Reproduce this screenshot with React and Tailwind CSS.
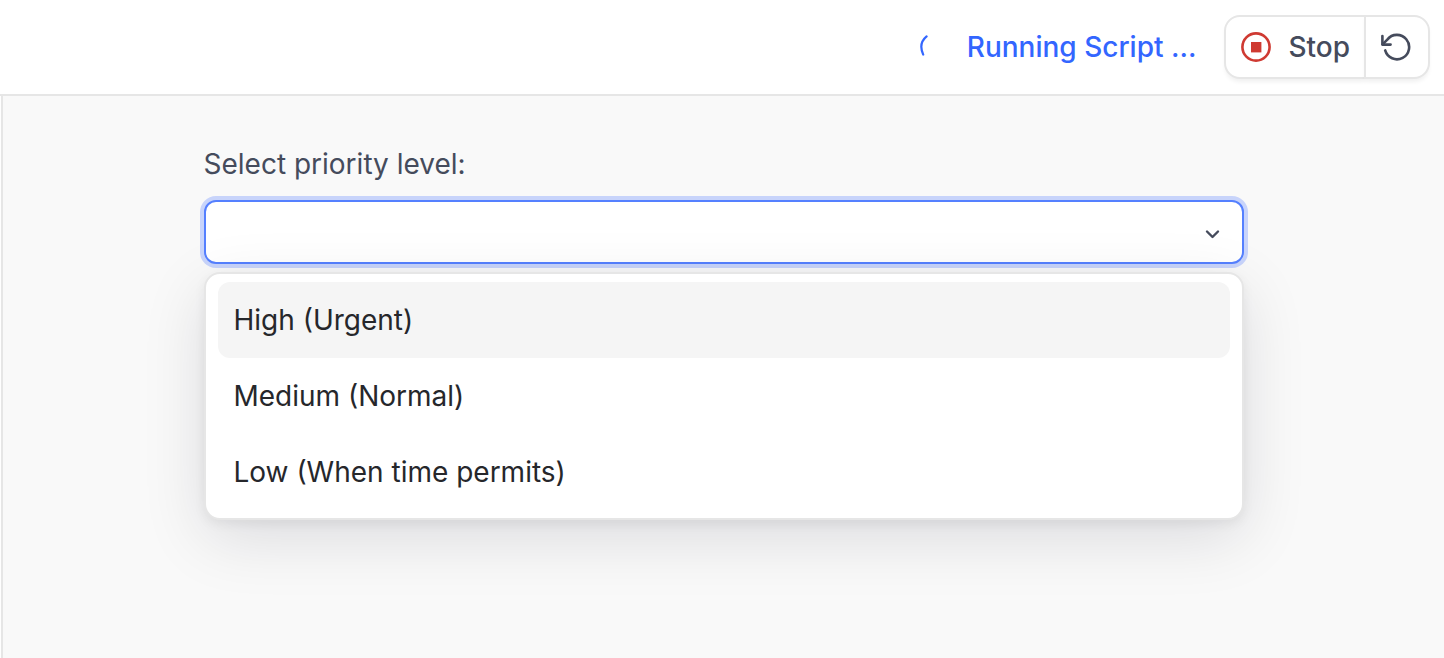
import { useState } from 'react';

const priorities = [
  { value: 'high', label: 'High (Urgent)' },
  { value: 'medium', label: 'Medium (Normal)' },
  { value: 'low', label: 'Low (When time permits)' },
];

function Spinner() {
  return (
    <svg className="size-7" viewBox="0 0 28 28" fill="none" aria-hidden="true">
      <path d="M7.6 3.4C2 8 0.8 14 4.2 21.6" stroke="#3366ff" strokeWidth="2.2" strokeLinecap="round" />
    </svg>
  );
}

function StopIcon() {
  return (
    <svg className="size-8" viewBox="0 0 32 32" fill="none" aria-hidden="true">
      <circle cx="16" cy="16" r="13.6" stroke="#cf3a32" strokeWidth="2.6" />
      <rect x="11" y="11" width="10.4" height="10.4" fill="#cf3a32" />
    </svg>
  );
}

function RestartIcon() {
  return (
    <svg
      className="size-8"
      viewBox="0 0 32 32"
      fill="none"
      stroke="#454b5c"
      strokeWidth="2.6"
      strokeLinecap="round"
      strokeLinejoin="round"
      aria-hidden="true"
    >
      <path d="M1.4 5v8.6H9.6" />
      <path d="M1.6 13.4 6.3 8.6A12.2 12.2 0 1 1 4.2 19.4" />
    </svg>
  );
}

function Header() {
  return (
    <header className="flex h-24 items-center justify-end border-b-2 border-[#e6e6e6] bg-white pr-3.5">
      <div role="status" className="mr-7 flex items-center gap-5 font-medium text-[#3366ff]">
        <Spinner />
        <span>Running Script ...</span>
      </div>
      <div className="flex font-medium text-[#454b5c]">
        <button
          type="button"
          className="flex h-16 items-center gap-4 rounded-l-2xl border-2 border-[#e6e6e6] bg-white px-3.5 shadow-[0_4px_4px_-1px_rgba(0,0,0,0.06)]"
        >
          <StopIcon />
          Stop
        </button>
        <button
          type="button"
          aria-label="Restart"
          className="-ml-0.5 flex h-16 items-center rounded-r-2xl border-2 border-[#e6e6e6] bg-white px-[15px] shadow-[0_4px_4px_-1px_rgba(0,0,0,0.06)]"
        >
          <RestartIcon />
        </button>
      </div>
    </header>
  );
}

function PriorityField() {
  const [open, setOpen] = useState(true);
  const [value, setValue] = useState('');
  const [active, setActive] = useState('high');

  const choose = (next) => {
    setValue(next);
    setOpen(false);
  };

  return (
    <div className="mx-auto max-w-[1040px]">
      <label htmlFor="priority" className="mb-4 block text-[#454b5c]">
        Select priority level:
      </label>
      <div className="relative">
        <select
          id="priority"
          value={value}
          onChange={(e) => setValue(e.target.value)}
          onMouseDown={(e) => {
            e.preventDefault();
            setOpen(!open);
          }}
          className="block h-16 w-full appearance-none rounded-xl border-2 border-[#5580ff] bg-white px-4 text-[#26272b] ring-4 ring-[#c8d4fb] outline-none"
        >
          <option value="" hidden></option>
          {priorities.map((p) => (
            <option key={p.value} value={p.value}>
              {p.label}
            </option>
          ))}
        </select>
        <svg
          className="pointer-events-none absolute top-6 right-5 size-6"
          viewBox="0 0 24 24"
          fill="none"
          stroke="#454b5c"
          strokeWidth="2.4"
          strokeLinecap="round"
          strokeLinejoin="round"
          aria-hidden="true"
        >
          <path d="m7 7.5 5.5 5.5L18 7.5" />
        </svg>

        {/* Options menu */}
        {open && (
          <div
            role="listbox"
            aria-label="Priority level"
            className="absolute inset-x-0 top-full mt-2 rounded-2xl border-2 border-[#e6e6e6] bg-white px-3 py-2 shadow-[0_4px_12px_rgba(0,0,0,0.06),0_18px_64px_rgba(10,10,30,0.12)]"
          >
            {priorities.map((p) => (
              <button
                key={p.value}
                type="button"
                role="option"
                aria-selected={value === p.value}
                onClick={() => choose(p.value)}
                onMouseEnter={() => setActive(p.value)}
                className={`block h-[76px] w-full rounded-xl px-4 text-left text-[#26272b] ${
                  active === p.value ? 'bg-[#f5f5f5]' : ''
                }`}
              >
                {p.label}
              </button>
            ))}
          </div>
        )}
      </div>
    </div>
  );
}

export default function App() {
  return (
    <div className="flex min-h-screen flex-col bg-white font-['Inter',sans-serif] text-[28px] leading-10">
      <Header />
      <main className="ml-px flex-1 border-l-2 border-[#e6e6e6] bg-[#f9f9f9] px-6 pt-12">
        <PriorityField />
      </main>
    </div>
  );
}
